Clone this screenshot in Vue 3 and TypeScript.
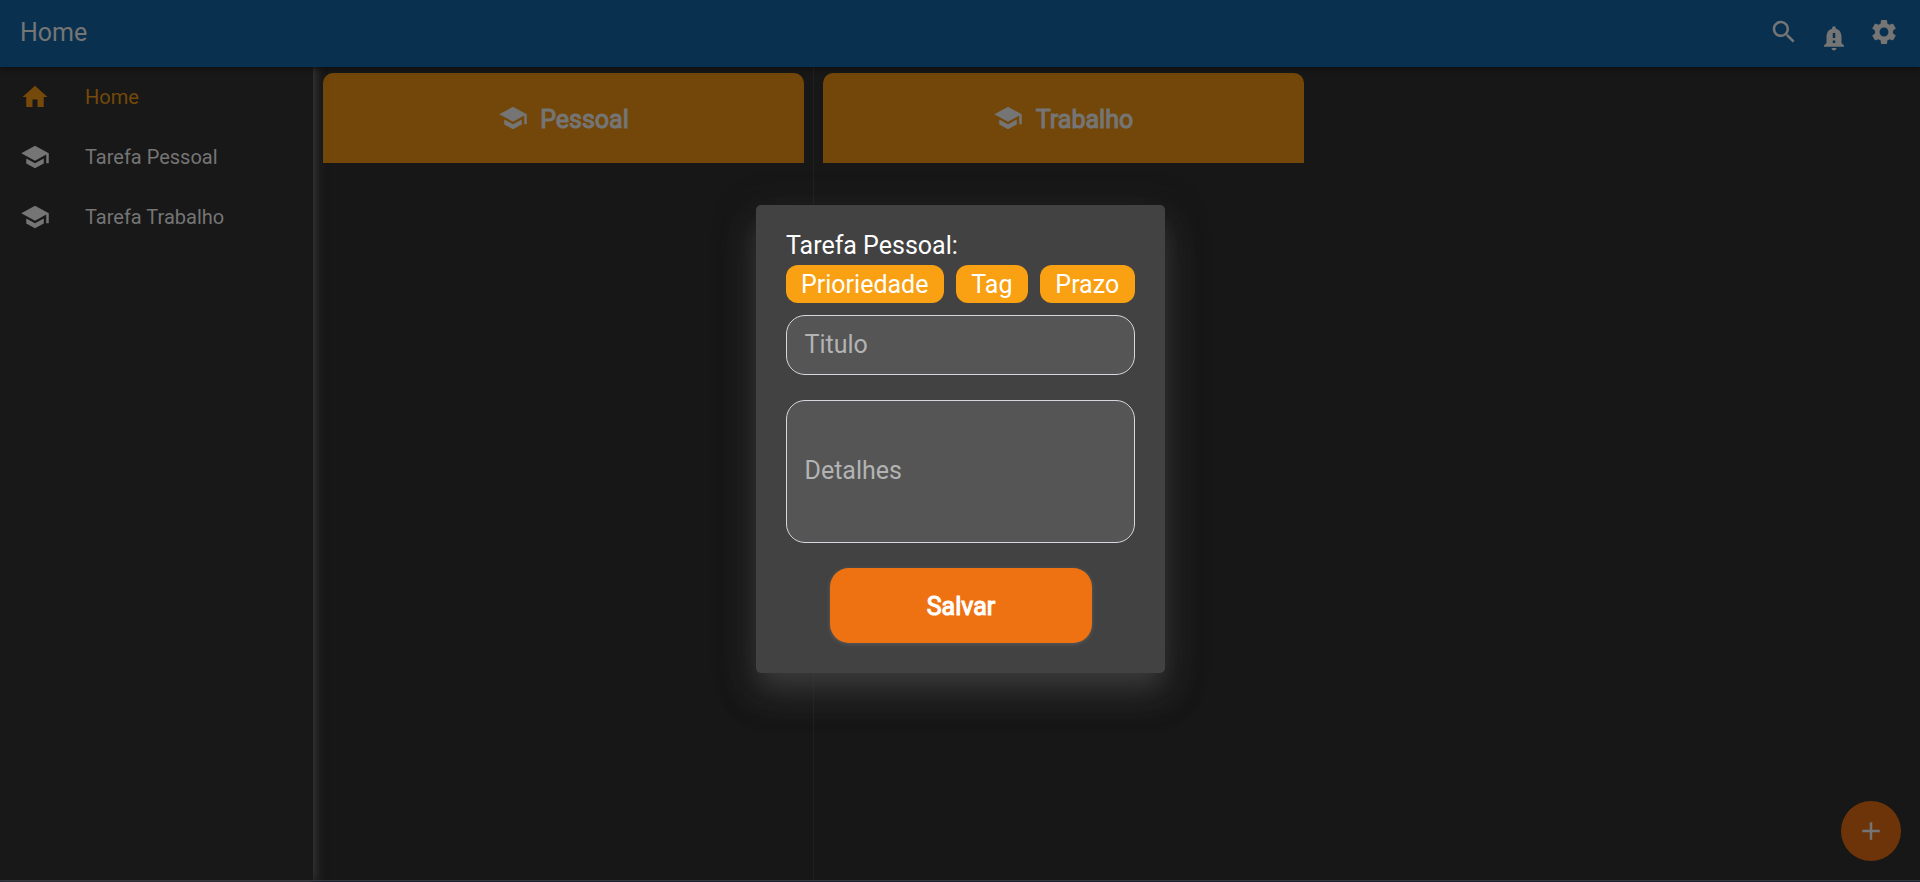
<script setup lang="ts">
interface Item { label: string; icon: string; active?: boolean }

const paths: Record<string, string> = {
  home: 'M10 20v-6h4v6h5v-8h3L12 3 2 12h3v8z',
  school: 'M5 13.18v4L12 21l7-3.82v-4L12 17l-7-3.82zM12 3L1 9l11 6 9-4.91V17h2V9L12 3z',
  search: 'M15.5 14h-.79l-.28-.27C15.41 12.59 16 11.11 16 9.5 16 5.91 13.09 3 9.5 3S3 5.91 3 9.5 5.91 16 9.5 16c1.61 0 3.09-.59 4.23-1.57l.27.28v.79l5 4.99L20.49 19l-4.99-5zm-6 0C7.01 14 5 11.99 5 9.5S7.01 5 9.5 5 14 7.01 14 9.5 11.99 14 9.5 14z',
  bell: 'M12 22c1.1 0 2-.9 2-2h-4c0 1.1.9 2 2 2zm6-6v-5c0-3.07-1.63-5.64-4.5-6.32V4c0-.83-.67-1.5-1.5-1.5s-1.5.67-1.5 1.5v.68C7.64 5.36 6 7.92 6 11v5l-2 2v1h16v-1l-2-2zm-5 0h-2v-2h2v2zm0-4h-2V8h2v4z',
  gear: 'M19.14 12.94c.04-.3.06-.61.06-.94 0-.32-.02-.64-.07-.94l2.03-1.58c.18-.14.23-.41.12-.61l-1.92-3.32c-.12-.22-.37-.29-.59-.22l-2.39.96c-.5-.38-1.03-.7-1.62-.94l-.36-2.54c-.04-.24-.24-.41-.48-.41h-3.84c-.24 0-.43.17-.47.41l-.36 2.54c-.59.24-1.13.57-1.62.94l-2.39-.96c-.22-.08-.47 0-.59.22L2.74 8.87c-.12.21-.08.47.12.61l2.03 1.58c-.05.3-.09.63-.09.94s.02.64.07.94l-2.03 1.58c-.18.14-.23.41-.12.61l1.92 3.32c.12.22.37.29.59.22l2.39-.96c.5.38 1.03.7 1.62.94l.36 2.54c.05.24.24.41.48.41h3.84c.24 0 .44-.17.47-.41l.36-2.54c.59-.24 1.13-.56 1.62-.94l2.39.96c.22.08.47 0 .59-.22l1.92-3.32c.12-.22.07-.47-.12-.61l-2.01-1.58zM12 15.6c-1.98 0-3.6-1.62-3.6-3.6s1.62-3.6 3.6-3.6 3.6 1.62 3.6 3.6-1.62 3.6-3.6 3.6z',
  plus: 'M19 13h-6v6h-2v-6H5v-2h6V5h2v6h6v2z',
}

const menu: Item[] = [
  { label: 'Home', icon: 'home', active: true },
  { label: 'Tarefa Pessoal', icon: 'school' },
  { label: 'Tarefa Trabalho', icon: 'school' },
]
const actions = ['search', 'bell', 'gear']
const boards = ['Pessoal', 'Trabalho']
const chips = ['Prioriedade', 'Tag', 'Prazo']
</script>

<template>
  <div class="app">
    <header class="bar">
      <h1>Home</h1>
      <nav class="actions">
        <svg v-for="a in actions" :key="a" :class="a" viewBox="0 0 24 24"><path :d="paths[a]" /></svg>
      </nav>
    </header>
    <div class="body">
      <aside class="drawer">
        <div v-for="m in menu" :key="m.label" class="item" :class="{ active: m.active }">
          <svg viewBox="0 0 24 24"><path :d="paths[m.icon]" /></svg>
          <span>{{ m.label }}</span>
        </div>
      </aside>
      <main class="boards">
        <section v-for="b in boards" :key="b" class="column">
          <div class="head">
            <svg viewBox="0 0 24 24"><path :d="paths.school" /></svg>
            <span class="strong">{{ b }}</span>
          </div>
        </section>
      </main>
    </div>
    <div class="edge"></div>
    <button class="fab"><svg viewBox="0 0 24 24"><path :d="paths.plus" /></svg></button>
    <div class="dialog">
      <div class="title">Tarefa Pessoal:</div>
      <div class="chips">
        <span v-for="c in chips" :key="c" class="chip">{{ c }}</span>
      </div>
      <div class="field">Titulo</div>
      <div class="field area">Detalhes</div>
      <button class="save strong">Salvar</button>
    </div>
  </div>
</template>

<style>
body { margin: 0; background: #171717; }
</style>

<style scoped>
.app { position: relative; width: 100%; height: 882px; overflow: hidden; display: flex; flex-direction: column; background: #171717; color: #757575; font-family: Roboto, "Liberation Sans", sans-serif; box-sizing: border-box; }
svg { display: block; fill: currentColor; flex: none; }
button { border: 0; padding: 0; font-family: inherit; }
.strong { font-weight: 400; -webkit-text-stroke: 1.1px currentColor; }
.bar { position: relative; z-index: 2; height: 67px; flex: none; background: #09304f; display: flex; justify-content: space-between; box-shadow: 0 2px 5px rgba(0, 0, 0, .35); }
h1 { margin: 0 0 0 20px; font-size: 25px; font-weight: 400; line-height: 65px; }
.actions { display: flex; gap: 20px; padding: 17px 21.5px 0 0; }
.actions svg { width: 30px; height: 30px; }
.actions .bell { margin-top: 6px; }
.body { flex: 1; min-height: 0; display: flex; }
.drawer { position: relative; z-index: 1; width: 312.5px; flex: none; background: #181818; box-shadow: 1px 0 10px 1px #3c3c3c; }
.item { display: flex; align-items: center; height: 60px; padding-left: 20px; gap: 35px; font-size: 20px; }
.item svg { width: 30px; height: 30px; }
.active { color: #744909; }
.boards { display: flex; padding-left: 1px; }
.column { width: 500px; box-sizing: border-box; padding: 6px 8.5px 0 9px; border-right: 1px solid #202020; }
.column:last-child { border-color: transparent; }
.head { height: 90px; background: #724709; border-radius: 10px 10px 0 0; display: flex; align-items: center; justify-content: center; gap: 12.5px; font-size: 25px; }
.head svg { width: 30px; height: 30px; }
.head span { padding-top: 2px; }
.edge { height: 1px; flex: none; background: #1b2135; border-top: 1px solid #37383d; }
.fab { position: absolute; left: 1841px; top: 801px; width: 60px; height: 60px; border-radius: 50%; background: #6d3409; color: #757575; display: flex; align-items: center; justify-content: center; }
.fab svg { width: 30px; height: 30px; }
.dialog { position: absolute; z-index: 3; left: 756px; top: 205px; width: 409px; height: 468px; box-sizing: border-box; padding: 25px 30px; border-radius: 5px; background: #424242; color: #fff; display: flex; flex-direction: column; font-size: 25px; box-shadow: 0 14px 19px -9px rgba(66, 66, 66, .6), 0 22px 34px 1px rgba(66, 66, 66, .42), 0 11px 38px 3px rgba(66, 66, 66, .36); }
.title { height: 35px; line-height: 32px; }
.chips { display: flex; justify-content: space-between; }
.chip { box-sizing: border-box; height: 38px; line-height: 38px; padding: 1px 15.8px 0 15px; border-radius: 12px; background: #f9a013; }
.field { box-sizing: border-box; height: 60px; margin-top: 12px; padding: 0 0 2px 17.5px; border: 1px solid #d6d8de; border-radius: 19px; background: #555; color: #b3b3b3; display: flex; align-items: center; }
.area { height: 143px; margin-top: 25px; }
.save { width: 262px; height: 75px; margin: 25px auto 0 43.5px; padding: 2px 0 0 1px; border-radius: 19px; background: #ee7211; color: #fff; font-size: 25px; box-shadow: 0 1px 4px rgba(120, 120, 120, .5); }
</style>
